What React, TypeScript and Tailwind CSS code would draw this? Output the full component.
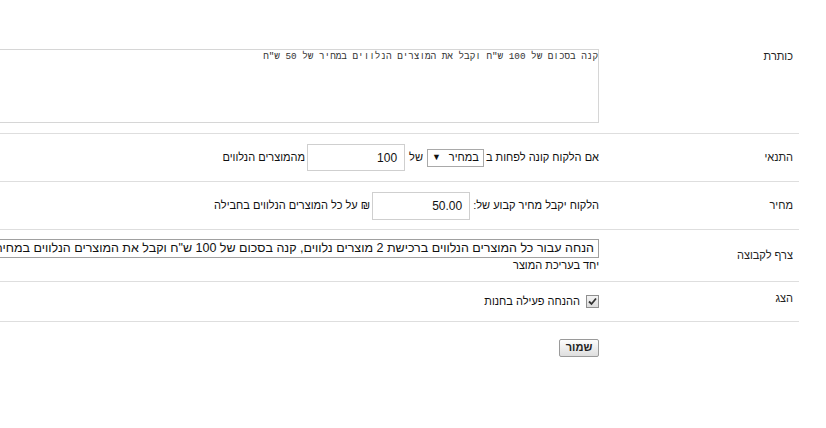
import React from "react";

function Row({
  label,
  children,
  className = "",
  labelClass = "",
}: {
  label: string;
  children: React.ReactNode;
  className?: string;
  labelClass?: string;
}) {
  return (
    <div className={`flex border-b border-[#dedede] ${className}`}>
      <div className={`w-[200px] shrink-0 pr-[6px] text-[11px] text-[#222] ${labelClass}`}>{label}</div>
      <div className="min-w-0 flex-1">{children}</div>
    </div>
  );
}

function TextInput({ value, className = "" }: { value: string; className?: string }) {
  return (
    <div
      className={`flex items-center justify-start border border-[#cfcfcf] bg-white pr-[7px] text-[12px] text-[#111] ${className}`}
    >
      {value}
    </div>
  );
}

export default function App() {
  return (
    <div
      dir="rtl"
      className="h-[428px] w-[826px] overflow-hidden bg-white font-['Liberation_Sans',Arial,sans-serif] text-[#222]"
    >
      <div className="mr-[27px] w-[799px] pt-[40px]">
        <Row label="כותרת" className="h-[94px] pt-[9px]" labelClass="-mt-[1px]">
          <div className="h-[74px] w-[760px] border border-[#d6d6d6] bg-white font-['Liberation_Mono',monospace] text-[9.3px] leading-[14px] text-[#333]">
            קנה בסכום של 100 ש"ח וקבל את המוצרים הנלווים במחיר של 50 ש"ח
          </div>
        </Row>

        <Row label="התנאי" className="h-[48px] items-center">
          <div className="flex items-center text-[11px] text-[#111]">
            <span>אם הלקוח קונה לפחות ב</span>
            <div className="mr-[2px] flex h-[18px] w-[57px] items-center justify-between border border-[#a9a9a9] bg-white px-[4px] text-[11px]">
              <span>במחיר</span>
              <span className="text-[9px]">▼</span>
            </div>
            <span className="mx-[4px]">של</span>
            <TextInput value="100" className="h-[27px] w-[98px]" />
            <span className="mr-[2px]">מהמוצרים הנלווים</span>
          </div>
        </Row>

        <Row label="מחיר" className="h-[48px] items-center">
          <div className="flex items-center text-[11px] text-[#111]">
            <span>הלקוח יקבל מחיר קבוע של:</span>
            <TextInput value="50.00" className="mr-[3px] h-[28px] w-[98px]" />
            <span className="mr-[2px]">₪ על כל המוצרים הנלווים בחבילה</span>
          </div>
        </Row>

        <Row label="צרף לקבוצה" className="h-[52px] items-center">
          <div className="pt-[1px]">
            <div className="flex h-[19px] w-[760px] items-center whitespace-nowrap border border-[#a0a0a0] bg-white pr-[4px] text-[12.5px] text-[#111]">
              הנחה עבור כל המוצרים הנלווים ברכישת 2 מוצרים נלווים, קנה בסכום של 100 ש"ח וקבל את המוצרים הנלווים במחיר של 50 ש"ח
            </div>
            <div className="text-[11px] leading-[15px] text-[#111]">יחד בעריכת המוצר</div>
          </div>
        </Row>

        <Row label="הצג" className="h-[40px] items-center" labelClass="-mt-[6px]">
          <div className="flex items-center text-[11px] text-[#111]">
            <div className="flex h-[13px] w-[13px] items-center justify-center border border-[#8f8f8f] bg-gradient-to-b from-[#f4f4f4] to-[#dcdcdc]">
              <svg width="9" height="9" viewBox="0 0 9 9">
                <path d="M1 4.5 L3.5 7 L8 1.5" fill="none" stroke="#333" strokeWidth="1.8" />
              </svg>
            </div>
            <span className="mr-[6px]">ההנחה פעילה בחנות</span>
          </div>
        </Row>

        <div className="flex pt-[12px]">
          <div className="w-[200px] shrink-0" />
          <div className="flex-1">
            <button className="h-[18px] w-[40px] rounded-[2px] border border-[#9a9a9a] bg-gradient-to-b from-[#fdfdfd] to-[#dedede] text-[11px] font-bold leading-none text-[#222]">
              שמור
            </button>
          </div>
        </div>
      </div>
    </div>
  );
}
